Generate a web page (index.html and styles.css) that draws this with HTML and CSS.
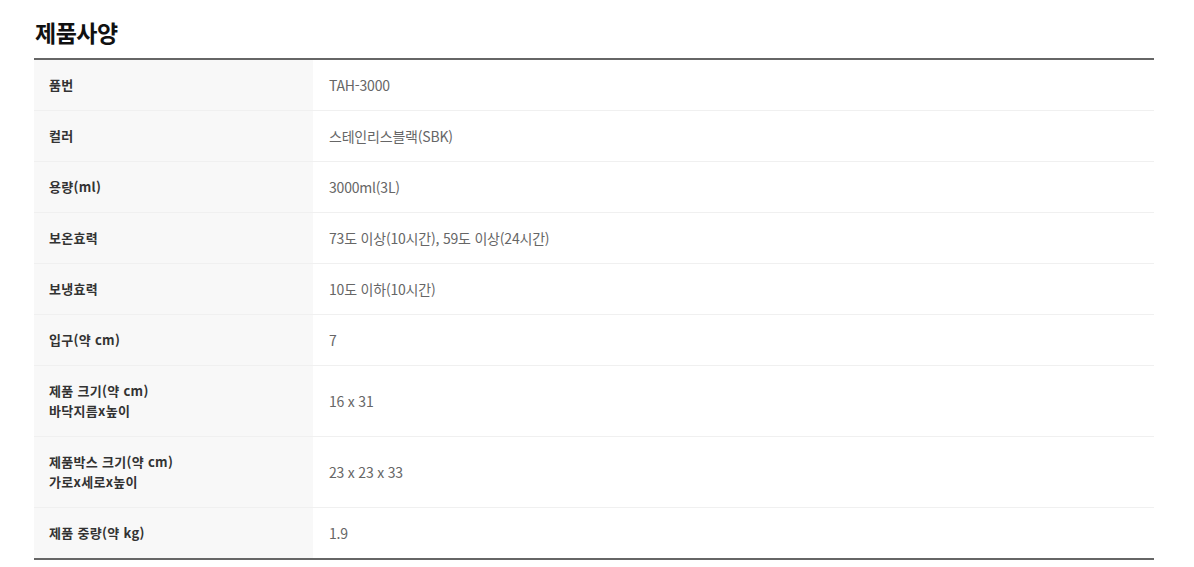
FILE: index.html
```html
<!DOCTYPE html>
<html lang="ko">
<head>
<meta charset="utf-8">
<link rel="stylesheet" href="styles.css">
</head>
<body>
<div class="spec">
  <h2 class="spec-title">제품사양</h2>
  <table class="spec-table">
    <tbody>
      <tr><th>품번</th><td>TAH-3000</td></tr>
      <tr><th>컬러</th><td>스테인리스블랙(SBK)</td></tr>
      <tr><th>용량(ml)</th><td>3000ml(3L)</td></tr>
      <tr><th>보온효력</th><td>73도 이상(10시간), 59도 이상(24시간)</td></tr>
      <tr><th>보냉효력</th><td>10도 이하(10시간)</td></tr>
      <tr><th>입구(약 cm)</th><td>7</td></tr>
      <tr><th>제품 크기(약 cm)<br>바닥지름x높이</th><td>16 x 31</td></tr>
      <tr><th>제품박스 크기(약 cm)<br>가로x세로x높이</th><td>23 x 23 x 33</td></tr>
      <tr><th>제품 중량(약 kg)</th><td>1.9</td></tr>
    </tbody>
  </table>
</div>
</body>
</html>
```
FILE: styles.css
```css
html, body {
  margin: 0;
  padding: 0;
  background: #fff;
}
body {
  font-family: "Noto Sans CJK KR", "Noto Sans", sans-serif;
}
.spec {
  padding: 16px 40px 0 34px;
  width: 1120px;
}
.spec-title {
  margin: 0 0 10px 1px;
  font-size: 23px;
  line-height: 32px;
  font-weight: 700;
  color: #111;
  letter-spacing: -0.5px;
}
.spec-table {
  width: 1120px;
  border-collapse: collapse;
  border-top: 2px solid #666;
  border-bottom: 2px solid #666;
}
.spec-table th,
.spec-table td {
  padding: 15px 15px;
  line-height: 20px;
  text-align: left;
  vertical-align: middle;
  border-bottom: 1px solid #f0f0f0;
}
.spec-table tr:last-child th,
.spec-table tr:last-child td {
  border-bottom: none;
}
.spec-table th {
  width: 249px;
  background: #f8f8f8;
  font-size: 13px;
  font-weight: 700;
  color: #333;
  letter-spacing: 0.3px;
}
.spec-table td {
  padding-left: 16px;
  font-size: 14px;
  font-weight: 400;
  color: #666;
  letter-spacing: -0.2px;
}
```
